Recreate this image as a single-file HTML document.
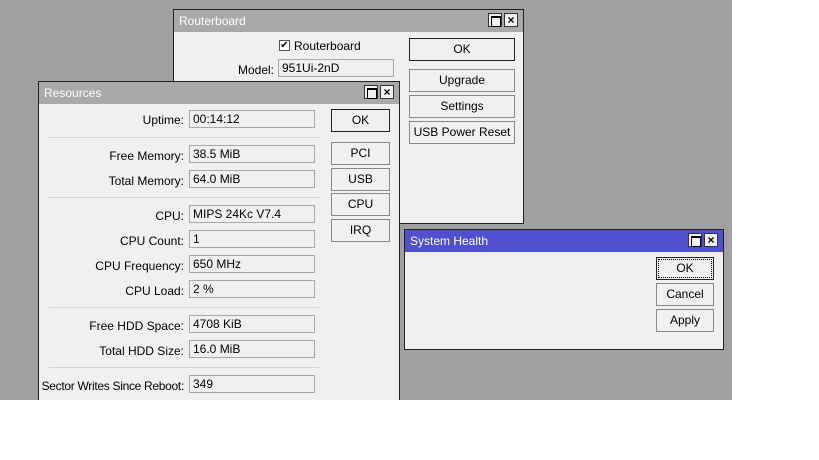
<!DOCTYPE html><html><head><style>
*{box-sizing:border-box;margin:0;padding:0}
body{width:819px;height:460px;background:#fff;position:relative;overflow:hidden;font-family:"Liberation Sans",Arial,sans-serif;font-size:12px;color:#000}
.bg{position:absolute;left:0;top:0;width:732px;height:400px;background:#a0a0a0;overflow:hidden}
.win{position:absolute;background:#f0f0f0;border:1px solid #222;overflow:hidden}
.tb{position:absolute;left:0;top:0;right:0;height:22px;background:#a9a9a9;color:#fff;padding:4px 0 0 5px;font-size:12px}
.tb.blue{background:#4f4fcf}
.ib{position:absolute;top:3px;width:14px;height:14px;background:#f0f0f0;border:1px solid #333}
.ib.max::after{content:"";position:absolute;left:2px;top:2px;width:8px;height:8px;border:1px solid #000;border-top-width:2px}
.ib.cl{font-size:12px;font-weight:bold;line-height:12px;text-align:center;color:#000}
.lbl{position:absolute;text-align:right;width:180px;white-space:nowrap}
.fld{position:absolute;height:18px;border:1px solid #a8a8a8;background:#f0f0f0;padding:1px 0 0 3px;white-space:nowrap}
.btn{position:absolute;height:23px;border:1px solid #888;background:#f0f0f0;text-align:center;line-height:21px;white-space:nowrap}
.btn.d{border:1px solid #222}
.sep{position:absolute;height:1px;background:#d5d5d5}
</style></head><body>
<div class="bg">

<div class="win" style="left:173px;top:9px;width:351px;height:215px">
<div class="tb">Routerboard</div>
<div class="ib max" style="left:314px"></div><div class="ib cl" style="left:330px">×</div>
<div style="position:absolute;left:105px;top:30px;width:11px;height:11px;border:1px solid #555;background:#fff;font-size:10px;line-height:9px;text-align:center">✔</div>
<div style="position:absolute;left:120px;top:29px">Routerboard</div>
<div class="lbl" style="left:-80px;top:53px">Model:</div>
<div class="fld" style="left:104px;top:49px;width:116px">951Ui-2nD</div>
<div class="btn d" style="left:235px;top:28px;width:106px">OK</div>
<div class="btn" style="left:235px;top:59px;width:106px">Upgrade</div>
<div class="btn" style="left:235px;top:85px;width:106px">Settings</div>
<div class="btn" style="left:235px;top:111px;width:106px">USB Power Reset</div>
</div>

<div class="win" style="left:38px;top:81px;width:362px;height:330px">
<div class="tb">Resources</div>
<div class="ib max" style="left:325px"></div><div class="ib cl" style="left:341px">×</div>
<div class="lbl" style="left:-35px;top:31px">Uptime:</div><div class="fld" style="left:150px;top:28px;width:126px">00:14:12</div>
<div class="sep" style="left:10px;top:55px;width:270px"></div>
<div class="lbl" style="left:-35px;top:67px">Free Memory:</div><div class="fld" style="left:150px;top:63px;width:126px">38.5 MiB</div>
<div class="lbl" style="left:-35px;top:92px">Total Memory:</div><div class="fld" style="left:150px;top:88px;width:126px">64.0 MiB</div>
<div class="sep" style="left:10px;top:115px;width:270px"></div>
<div class="lbl" style="left:-35px;top:127px">CPU:</div><div class="fld" style="left:150px;top:123px;width:126px">MIPS 24Kc V7.4</div>
<div class="lbl" style="left:-35px;top:152px">CPU Count:</div><div class="fld" style="left:150px;top:148px;width:126px">1</div>
<div class="lbl" style="left:-35px;top:177px">CPU Frequency:</div><div class="fld" style="left:150px;top:173px;width:126px">650 MHz</div>
<div class="lbl" style="left:-35px;top:202px">CPU Load:</div><div class="fld" style="left:150px;top:198px;width:126px">2 %</div>
<div class="sep" style="left:10px;top:225px;width:270px"></div>
<div class="lbl" style="left:-35px;top:237px">Free HDD Space:</div><div class="fld" style="left:150px;top:233px;width:126px">4708 KiB</div>
<div class="lbl" style="left:-35px;top:262px">Total HDD Size:</div><div class="fld" style="left:150px;top:258px;width:126px">16.0 MiB</div>
<div class="sep" style="left:10px;top:285px;width:270px"></div>
<div class="lbl" style="left:-35px;top:297px;letter-spacing:-0.3px">Sector Writes Since Reboot:</div><div class="fld" style="left:150px;top:293px;width:126px">349</div>
<div class="btn d" style="left:292px;top:27px;width:59px">OK</div>
<div class="btn" style="left:292px;top:60px;width:59px">PCI</div>
<div class="btn" style="left:292px;top:86px;width:59px">USB</div>
<div class="btn" style="left:292px;top:111px;width:59px">CPU</div>
<div class="btn" style="left:292px;top:137px;width:59px">IRQ</div>
</div>

<div class="win" style="left:404px;top:229px;width:320px;height:121px">
<div class="tb blue">System Health</div>
<div class="ib max" style="left:283px"></div><div class="ib cl" style="left:299px">×</div>
<div class="btn d" style="left:251px;top:27px;width:58px;outline:1px dotted #000;outline-offset:-3px">OK</div>
<div class="btn" style="left:251px;top:53px;width:58px">Cancel</div>
<div class="btn" style="left:251px;top:79px;width:58px">Apply</div>
</div>
</div>
</body></html>
